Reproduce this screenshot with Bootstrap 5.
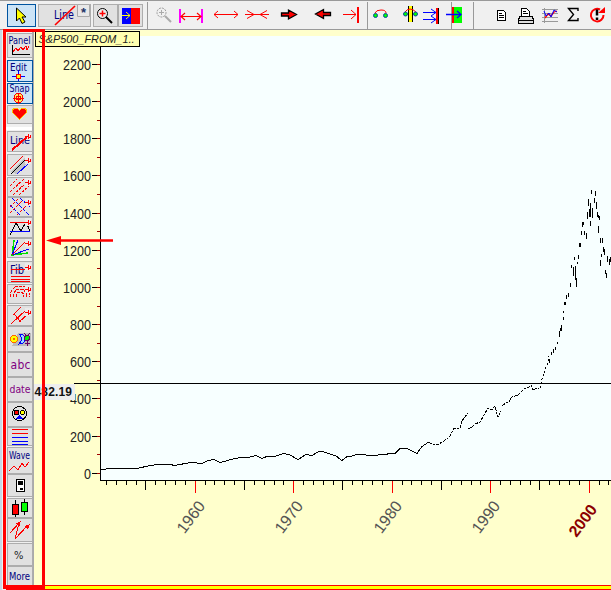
<!DOCTYPE html>
<html lang="en">
<head>
<meta charset="utf-8">
<title>S&amp;P500 chart</title>
<link href="https://cdn.jsdelivr.net/npm/bootstrap@5.3.0/dist/css/bootstrap.min.css" rel="stylesheet">
<style>
body{width:611px;height:590px;background:#ffffcc;font-family:"Liberation Sans",Arial,sans-serif;overflow:hidden}
svg{display:block;overflow:visible;flex:none;fill:none;stroke-width:1}
svg text{stroke:none;font-family:"Liberation Sans",Arial,sans-serif}
.toolbar{height:30px;background:#f0f0f0;border-top:1px solid #999;border-bottom:1px solid #999;padding-left:7px}
.workspace{height:560px}
.tool{border:1px solid #adadad;background:#e1e1e1;border-radius:0;padding:0;flex:none;height:23px;overflow:visible}
.tool.on{border-color:#0054a0;background:#cce4f7}
.line-tool{margin-left:2px;margin-right:2px}
.divider{width:1px;height:27px;background:#999;flex:none}
.tools{width:34px;background:#f0f0f0;border-right:2px solid #aaa;border-left:2px solid #c8d8e8;padding:3px 0 0 5px}
.tools .tool{width:26px;height:auto}
.tools svg,.px{shape-rendering:crispEdges}
.g1{margin-bottom:1px}.g2{margin-bottom:2px}.g3{margin-bottom:3px}
.grp{border-bottom:3px solid #fff;margin-left:-3px;height:6px;margin-bottom:1px}
.nv{fill:#000080}.pu{fill:#800080}
.tools svg text{font-family:"DejaVu Sans Condensed","DejaVu Sans",sans-serif}
.r{stroke:#f00}.b{stroke:#00f}.k{stroke:#000}.m{stroke:#f0f}
.frame{left:3px;top:29px;width:42px;height:560px;border:3px solid #f00;pointer-events:none}
</style>
<script src="https://cdn.jsdelivr.net/npm/bootstrap@5.3.0/dist/js/bootstrap.bundle.min.js"></script>
</head>
<body class="position-relative m-0">
<svg width="0" height="0" class="position-absolute"><defs>
<g id="pin"><path d="M0 0h6v8h-6z" fill="#eaeaea"/><path class="r" d="M0 4.500h3M3.500 2v5M3 5.500h3M5.500 3v3"/></g>
</defs></svg>
<header class="toolbar d-flex align-items-center">
<button class="btn tool on" aria-label="Select"><svg width="27" height="21" viewBox="8 5 27 21"><path class="k" fill="#ff0" d="M16.500 8v13l3-3 2.500 5.500 3-1.500-3-5h4z"/></svg></button>
<button class="btn tool line-tool" aria-label="Line"><svg width="51" height="21" viewBox="39 5 51 21"><text class="nv" x="54" y="19" font-size="12" textLength="20" lengthAdjust="spacingAndGlyphs" style="font-family:'DejaVu Sans Condensed'">Line</text><path class="r" stroke-width="1.700" d="M55 25L75 6"/><path fill="#e8e8e8" stroke="#aaa" d="M77.500 4.500h12v12h-12z"/><text x="81" y="17" font-size="13" font-weight="bold" fill="#236">*</text></svg></button>
<button class="btn tool ms-0" aria-label="Zoom"><svg width="23" height="21" viewBox="94 5 23 21"><circle class="k" cx="102.500" cy="13.500" r="5" fill="#eee"/><path class="r" stroke-width="1.500" d="M99.500 13.500h6M102.500 10.500v6"/><path class="k" stroke-width="2" d="M106 17l6 6"/></svg></button>
<button class="btn tool" aria-label="Blue red"><svg width="23" height="21" viewBox="119 5 23 21"><path fill="#00f" d="M122 8h9v16h-9z"/><path fill="#f00" d="M131 8h9v16h-9z"/><path stroke="#ff0" d="M122 15.500h8M126 12l4 3.500-4 3.500"/></svg></button>
<span class="divider ms-1"></span>
<svg width="28" height="28" viewBox="147 1 28 28"><circle cx="160.500" cy="12.500" r="4.500" stroke="#999" stroke-dasharray="2 1"/><path stroke="#aaa" d="M158 12.500h5M160.500 10v5"/><path stroke="#aaa" stroke-width="2" d="M164 16l6 6"/></svg>
<svg width="33" height="28" viewBox="176 1 33 28"><path class="m" stroke-width="2" d="M180 9v14M202 9v14"/><path class="r" stroke-width="1.200" d="M181 16.500h20M185 13l-4 3.500 4 3.500M197 13l4 3.500-4 3.500"/></svg>
<svg width="34" height="28" viewBox="209 1 34 28"><path class="r" d="M214 14.500h24M218 11l-4 3.500 4 3.500M234 11l4 3.500-4 3.500"/></svg>
<svg width="32" height="28" viewBox="243 1 32 28"><path class="r" d="M245 14.500h24M247 10.500l7 4-7 4M267 10.500l-7 4 7 4"/></svg>
<svg width="32" height="28" viewBox="276 1 32 28"><path class="k" fill="#f00" stroke-width="1.300" d="M282.500 13h7v-3l8 4.500-8 4.500v-3h-7z"/></svg>
<svg width="32" height="28" viewBox="308 1 32 28"><path class="k" fill="#f00" stroke-width="1.300" d="M331.500 12.500h-7v-3l-8 4.500 8 4.500v-3h7z"/></svg>
<svg width="28" height="28" viewBox="339 1 28 28"><path class="r" d="M343 14.500h13M351 10l5 4.500-5 4.500"/><path class="r" stroke-width="2" d="M358 7v16"/></svg>
<span class="divider"></span>
<svg width="28" height="28" viewBox="368 1 28 28"><path class="r" d="M375 13q1-3 6-3t5 3"/><circle cx="375.500" cy="15.500" r="2" fill="#0f0" stroke="#0645a0"/><circle cx="385.500" cy="15.500" r="2" fill="#0f0" stroke="#0645a0"/></svg>
<svg width="25" height="28" viewBox="396 1 25 28"><path fill="#ff0" d="M409 6h3v16h-3z"/><path class="k" d="M408.500 6v16M412.500 6v16"/><path class="r" d="M405 12q2-3 5-3t6 3"/><circle cx="405.500" cy="14" r="2" fill="#0f0" stroke="#0645a0"/><circle cx="415.500" cy="14" r="2" fill="#0f0" stroke="#0645a0"/></svg>
<svg width="30" height="28" viewBox="421 1 30 28"><path class="b" d="M423 12.500h13M431 9l5 3.500-5 3.500M423 19.500h13M431 16l5 3.500-5 3.500"/><path class="r" stroke-width="2" d="M437 8v16"/><path class="k" d="M438.500 8v16"/></svg>
<span class="divider"></span>
<svg width="21" height="28" viewBox="452 1 21 28"><path fill="#0f0" d="M454 7h8v16h-8z"/><path class="r" stroke-width="2" d="M453 7v16"/><path class="b" stroke-width="1.300" d="M446 14.500h15M457 11l4 3.500-4 3.500"/></svg>
<span class="divider"></span>
<svg width="36" height="28" viewBox="475 1 36 28" class="px"><path class="k" fill="#fff" d="M498.500 10.500h6l2 2v8h-8zM500 13.500h3M500 15.500h5M500 17.500h5"/></svg>
<svg width="28" height="28" viewBox="511 1 28 28" class="px"><path class="k" fill="#fff" d="M522.500 17v-8.500h5l3 3v5.500M524 11.500h3M524 13.500h5"/><path class="k" fill="#ddd" d="M521 16.500h12l1.500 3v3.500h-15v-3.500zM519.500 20.500h15"/></svg>
<svg width="27" height="28" viewBox="539 1 27 28"><path stroke="#999" d="M545.500 8v15M543 9.500h16M543 13.500h16M543 17.500h16M543 21.500h16"/><path class="r" stroke-width="1.300" d="M546 18l3-4 3 2 3-4 3-1"/><path class="b" d="M545 11l2 5 3-3 2 4 3-7 3 2"/></svg>
<svg width="22" height="28" viewBox="566 1 22 28"><path class="k" stroke-width="1.400" d="M579 11v-2.500h-9.500l5 6-5 6h9.500v-2.500"/></svg>
<svg width="22" height="28" viewBox="588 1 22 28"><path class="r" stroke-width="2" d="M601 9.500a6.300 6.300 0 1 0 3.500 5.500"/><path fill="#f00" d="M599 13h7v-6z"/><path class="k" stroke-width="2.500" d="M598 9.500v6M598 17.500v2.500"/></svg>
</header>
<main class="workspace d-flex">
<nav class="tools d-flex flex-column flex-shrink-0">
<button class="btn tool g2" aria-label="Panel"><svg width="24" height="23" viewBox="8 34 24 23"><text class="nv" x="8.500" y="44" font-size="11" textLength="22" lengthAdjust="spacingAndGlyphs">Panel</text><path class="k" d="M12.500 45v9.500h17"/><path class="r" d="M13 52l3-4 2 3 3-4 2 3 3-4 1 4 2-4"/></svg></button>
<button class="btn tool on g1" aria-label="Edit"><svg width="24" height="20" viewBox="8 61 24 20"><text class="nv" x="10" y="71" font-size="11" textLength="17" lengthAdjust="spacingAndGlyphs">Edit</text><path class="b" d="M18.500 70v11M12 76.500h13"/><path fill="#ff0" class="r" d="M16.500 74.500h4v4h-4z"/></svg></button>
<button class="btn tool on g1" aria-label="Snap"><svg width="24" height="19" viewBox="8 84 24 19"><text class="nv" x="9.500" y="92" font-size="11" textLength="20" lengthAdjust="spacingAndGlyphs">Snap</text><circle cx="18.500" cy="98" r="4.500" class="r" fill="#fe5"/><circle cx="18.500" cy="98" r="2" class="r"/><path class="r" d="M13 98.500h11M18.500 93v11"/></svg></button>
<button class="btn tool" aria-label="Favourites"><svg width="24" height="17" viewBox="8 106 24 17"><path fill="#f00" stroke="#fb0" d="M19.500 119.500l-7-7c-1-4 4-6 7-2 3-4 8-2 7 2z"/></svg></button>
<div class="grp"></div>
<button class="btn tool g2" aria-label="Line"><svg width="24" height="19" viewBox="8 132 24 19"><text class="nv" x="10" y="144" font-size="11" textLength="20" lengthAdjust="spacingAndGlyphs">Line</text><use href="#pin" x="25" y="132"/><path class="r" stroke-width="2" d="M12 150l15-13"/></svg></button>
<button class="btn tool g1" aria-label="Parallel"><svg width="24" height="20" viewBox="8 154 24 20"><path fill="#c4c4c4" d="M10 171L27 155h4v4l-15 14z"/><path class="r" d="M10 168l13-13"/><path class="k" d="M11 173l17-17"/><path class="b" d="M17 173l12-11"/><use href="#pin" x="25" y="155"/></svg></button>
<button class="btn tool" aria-label="Hatch"><svg width="24" height="18" viewBox="8 177 24 18"><path class="r" stroke-dasharray="3 1" d="M10 185l7-7M10 191l14-13M13 194l13-12M19 194l10-9"/><use href="#pin" x="25" y="177"/></svg></button>
<button class="btn tool" aria-label="Grid"><svg width="24" height="18" viewBox="8 197 24 18"><path class="r" stroke-dasharray="3 1" d="M10 206l8-8M10 212l14-14M17 214l12-12"/><path class="b" stroke-dasharray="4 1" d="M10 204l11 11M12 197l17 17M20 197l10 9"/><use href="#pin" x="25" y="197"/></svg></button>
<button class="btn tool" aria-label="Channel"><svg width="24" height="19" viewBox="8 217 24 19"><path class="k" d="M10 234l6-12 5 8 5-9 4 9"/><path class="r" d="M10 221.500h17"/><path class="b" d="M10 230.500h20"/><use href="#pin" x="25" y="217"/></svg></button>
<button class="btn tool g3" aria-label="Fan"><svg width="24" height="18" viewBox="8 238 24 18"><path stroke="#0d0" stroke-width="1.500" d="M12 255l2-16M12 254l16-2"/><path class="b" d="M12 254l6-15M12 254l17-6"/><path class="r" d="M12 254l13-13"/><use href="#pin" x="25" y="238"/></svg></button>
<button class="btn tool g1" aria-label="Fibonacci"><svg width="24" height="20" viewBox="8 261 24 20"><text class="nv" x="10" y="273" font-size="11.500" textLength="14" lengthAdjust="spacingAndGlyphs">Fib</text><path class="r" d="M11 268.500h15M11 275.500h19M11 278.500h19M11 280.500h19"/><use href="#pin" x="25" y="262"/></svg></button>
<button class="btn tool g1" aria-label="Arcs"><svg width="24" height="18" viewBox="8 285 24 18"><path class="r" stroke-dasharray="3 1" d="M10 297q1-11 10-11 9 0 10 11M13 297q1-8 7-8t7 8M16 297q0-5 4-5t4 5"/><use href="#pin" x="25" y="285"/></svg></button>
<button class="btn tool" aria-label="Pitchfork"><svg width="24" height="19" viewBox="8 306 24 19"><path class="r" d="M11 324l16-15M13 315l8-8M19 322l9-8M14 314l7 8"/><use href="#pin" x="25" y="308"/></svg></button>
<button class="btn tool" aria-label="Astro"><svg width="24" height="24" viewBox="8 327 24 24"><path fill="#bbb" d="M18 333h13v13h-19z"/><circle cx="14" cy="339" r="3.500" fill="#ff0" stroke="#f60"/><circle cx="14" cy="339" r="1" fill="#f60"/><path fill="#9df" class="b" d="M19 334q6 0 6 5t-6 5q5-5 0-10z"/><circle cx="27" cy="338" r="2.500" fill="#0e0" stroke="#606"/><path stroke="#606" d="M27.500 341v5M25 343.500h5M24 333l2 2h2l2-2"/></svg></button>
<button class="btn tool" aria-label="Text"><svg width="24" height="23" viewBox="8 353 24 23"><text class="pu" x="10.500" y="369" font-size="12" textLength="20">abc</text></svg></button>
<button class="btn tool" aria-label="Date"><svg width="24" height="23" viewBox="8 378 24 23"><text class="pu" x="9.500" y="393" font-size="11" textLength="21" lengthAdjust="spacingAndGlyphs">date</text></svg></button>
<button class="btn tool" aria-label="Shapes"><svg width="24" height="23" viewBox="8 403 24 23"><circle class="k" cx="19.500" cy="413.500" r="7"/><path class="k" fill="#f00" d="M14.500 410.500h4v4h-4z"/><circle cx="22.500" cy="412.500" r="2" class="k" fill="#ff0"/><path fill="#00f" d="M16 419l3.500-4 3.500 4z"/></svg></button>
<button class="btn tool g1" aria-label="Levels"><svg width="24" height="17" viewBox="8 428 24 17"><path class="r" d="M12 429.500h16M12 433.500h16"/><path class="b" d="M12 437.500h16M12 441.500h16M12 444.500h16"/></svg></button>
<button class="btn tool" aria-label="Wave"><svg width="24" height="25" viewBox="8 448 24 25"><text class="nv" x="9" y="459" font-size="11" textLength="21" lengthAdjust="spacingAndGlyphs">Wave</text><path class="r" d="M9 471l5-5 4 4 4-7 3 4 4-5"/></svg></button>
<button class="btn tool g1" aria-label="Device"><svg width="24" height="21" viewBox="8 475 24 21"><path class="k" fill="#fff" d="M16.500 479.500h8v12h-8z"/><path fill="#000" d="M18 481h5v4h-5zM20 488h3v2h-3z"/></svg></button>
<button class="btn tool" aria-label="Candles"><svg width="24" height="18" viewBox="8 499 24 18"><path class="k" d="M15.500 500v17M24.500 499v16"/><path class="k" fill="#f00" d="M12.500 504.500h6v10h-6z"/><path class="k" fill="#0f0" d="M21.500 502.500h6v9h-6z"/></svg></button>
<button class="btn tool g1" aria-label="Swings"><svg width="24" height="22" viewBox="8 519 24 22"><path class="r" d="M10 533l9-10-4 16 13-14M16 524l4-2-1 4"/><path fill="#f00" d="M30 524l-6 2 4 3z"/></svg></button>
<button class="btn tool" aria-label="Percent"><svg width="24" height="21" viewBox="8 544 24 21"><text x="14" y="559" font-size="11" fill="#222">%</text></svg></button>
<button class="btn tool" aria-label="More"><svg width="24" height="18" viewBox="8 567 24 18"><text class="nv" x="9" y="580" font-size="11" textLength="21" lengthAdjust="spacingAndGlyphs">More</text></svg></button>
</nav>
<svg id="chart" class="px" width="577" height="560" viewBox="34 30 577 560">
<path fill="#ffc" d="M34 30h577v555H34z"/><path fill="#f7ffff" d="M101 36h510v444H101z"/>
<g id="axes"></g>
<path class="k" d="M101 469.500L112 468.500 137 468.500 150 465.500 158 464.500 170 464.500 175 465.500 185 463.500 192 462.500 202 463.500 208 460.500 214 459.500 220 462.500 235 458.500 245 457 250 457 256 455.500 262 458.500 268 456 276 456 284 453.500 290 455 298 459.500 306 454.500 312 455.500 318 452 323 451.500 331 454.500 336 456 342 460.500 347 456.500 352 456 357 454.500 363 454 368 455.500 375 456 380 454.500 385 454.500 390 453.500 395 453.500 400 448.500 407 448.500 412 451 417 453.500 422 446.500 428 442.500"/>
<path class="k" stroke-dasharray="4 1 2 1" d="M428 442.500L437 445 443 441.500 449 437.500 454 428.500 460 428.500 462 421 468 413M468 429L472 427 475 424 480 422 484 415 488 408 492 410 495 406M495 407L498 417 501 411M502 406L506 403 509 402 512 397 518 395 524 389 529 387 531 385 533 390 537 388 539 389"/>
<path class="k" stroke-dasharray="2 2" d="M540 388l2-9 3-9 3-8 1-6"/>
<path class="k" d="M549.500 359v4M551.500 352v3M553.500 349v4M555.500 347v3M557.500 342v2M559.500 331v6M560.500 328v3M561.500 325v6M563.500 317v3M563.500 311v2M564.500 302v3M565.500 302v3M566.500 295v4M568.500 293v4M570.500 283v4M571.500 265v3M573.500 267v9M575.500 266v14M576.500 278v9M574.500 257v3M578.500 255v4M577.500 262v2M579.500 243v4M580.500 243v4M581.500 231v4M582.500 222v5M583.500 222v3M584.500 231v4M586.500 233v6M587.500 212v7M588.500 199v7M589.500 209v8M590.500 203v14M590.500 221v5M591.500 190v4M592.500 208v10M594.500 198v5M595.500 191v5M596.500 202v7M597.500 212v5M598.500 215v3M599.500 216v4M598.500 226v7M600.500 238v5M602.500 238v5M603.500 247v5M604.500 249v6M600.500 260v6M601.500 254v3M605.500 270v4M606.500 273v5M607.500 256v6M609.500 259v6M610.500 257v5"/>
<path class="k" d="M74 383.500h537M100.500 46v435M100 480.500h511"/>
<path fill="#eee" d="M34 384h41v16H34z"/><text x="34.500" y="396" font-size="12" font-weight="bold" textLength="37.500" fill="#111">482.19</text>
<path fill="#ffffb0" class="k" d="M35.500 31.500h104v15h-104z"/><text x="38.500" y="43" font-size="11.500" font-style="italic" textLength="96" lengthAdjust="spacingAndGlyphs" fill="#222">S&amp;P500_FROM_1..</text>
<path fill="#ff0" d="M6 586h605v3H6z"/><path fill="#f00" d="M6 585h605v1H6zM6 589h605v1H6z"/>
</svg>
</main>
<div class="frame position-absolute"></div>
<svg class="position-absolute top-0 start-0 pe-none" width="611" height="590"><path stroke="#f00" stroke-width="2.600" d="M58 240.500h55"/><path fill="#f00" d="M46 240.500l15-4.500v9z"/></svg>
<script>
const make = (tag, attrs, text) => {
  const el = document.createElementNS('http://www.w3.org/2000/svg', tag);
  for (const k in attrs) el.setAttribute(k, attrs[k]);
  if (text !== undefined) el.textContent = text;
  document.getElementById('axes').append(el);
};
for (let v = 0; v <= 2200; v += 100) {
  const y = Math.floor(473.3 - v * 0.18585) + .5;
  if (v % 200 === 0) {
    make('path', {d: `M92 ${y}h8`, stroke: '#000'});
    const s = String(v), w = s.length * 7;
    make('text', {x: 91 - w, y: y + 5.5, 'font-size': 14, textLength: w, lengthAdjust: 'spacingAndGlyphs', fill: '#222'}, s);
  }
  make('path', {d: `M97 ${y}h3`, stroke: '#a00000'});
}
for (let year = 1951; year <= 2002; year++) {
  const x = Math.floor(195.2 + (year - 1960) * 9.85) + .5, dec = year % 10 === 0;
  make('path', {d: `M${x} ${dec ? 480 : 481}v${dec ? 13 : year % 5 === 0 ? 9 : 4}`, stroke: dec ? '#f00' : '#000'});
  if (dec) {
    const bold = year === 2000, tx = x - (bold ? 13 : 11), ty = bold ? 538 : 534.5;
    make('text', {x: tx, y: ty, transform: `rotate(-53 ${tx} ${ty})`, 'font-size': bold ? 16 : 16, 'font-weight': bold ? 700 : 400, fill: bold ? '#8b0000' : '#555'}, year);
  }
}
</script>
</body>
</html>
